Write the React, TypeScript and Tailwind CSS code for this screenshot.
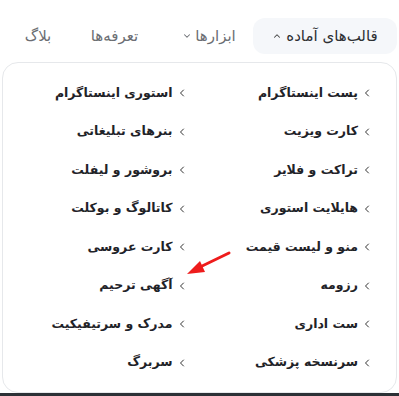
import { ChevronLeft, ChevronUp, ChevronDown } from "lucide-react";

const rightItems = [
  "پست اینستاگرام",
  "کارت ویزیت",
  "تراکت و فلایر",
  "هایلایت استوری",
  "منو و لیست قیمت",
  "رزومه",
  "ست اداری",
  "سرنسخه پزشکی",
];

const leftItems = [
  "استوری اینستاگرام",
  "بنرهای تبلیغاتی",
  "بروشور و لیفلت",
  "کاتالوگ و بوکلت",
  "کارت عروسی",
  "آگهی ترحیم",
  "مدرک و سرتیفیکیت",
  "سربرگ",
];

function Column({ items, className }: { items: string[]; className: string }) {
  return (
    <div className={`flex flex-col ${className}`}>
      {items.map((item) => (
        <a
          key={item}
          href="#"
          className="flex h-[38.5px] items-center gap-[3px] text-[12.5px] font-bold text-[#1f2328]"
        >
          <ChevronLeft className="h-3 w-3 text-[#333]" strokeWidth={2} />
          <span>{item}</span>
        </a>
      ))}
    </div>
  );
}

export default function App() {
  return (
    <div
      dir="rtl"
      className="relative h-[396px] w-[399px] overflow-hidden bg-white"
      style={{ fontFamily: '"DejaVu Sans", "Noto Sans", sans-serif' }}
    >
      {/* Top nav */}
      <nav className="flex items-center pt-[18px] pr-[2px]">
        <button className="flex h-[36px] w-[144px] items-center justify-center gap-[4px] rounded-xl bg-[#f5f7fa] text-[15px] text-[#2d2f33]">
          <span>قالب‌های آماده</span>
          <ChevronUp className="h-[10px] w-[10px] text-[#444]" strokeWidth={2.5} />
        </button>
        <button className="mr-[15px] flex w-[58px] items-center justify-center gap-[3px] text-[15px] text-[#6b6e73]">
          <span>ابزارها</span>
          <ChevronDown className="h-[10px] w-[10px]" strokeWidth={2.5} />
        </button>
        <a href="#" className="mr-[36px] w-[59px] text-center text-[15px] text-[#6b6e73]">
          تعرفه‌ها
        </a>
        <a href="#" className="mr-[27px] w-[40px] text-center text-[15px] text-[#6b6e73]">
          بلاگ
        </a>
      </nav>

      {/* Dropdown panel */}
      <div className="mx-[2px] mt-[8px] grid h-[331px] grid-cols-2 rounded-2xl border border-[#e6e8eb] bg-white py-[11px]">
        <Column items={rightItems} className="pr-[23px]" />
        <Column items={leftItems} className="pr-[12px]" />
      </div>

      {/* background peeking below */}
      <div className="absolute bottom-0 left-0 right-0 h-[3px] bg-[#2c3136]" />

      {/* red annotation arrow */}
      <svg
        className="pointer-events-none absolute left-0 top-0"
        width="399"
        height="396"
        viewBox="0 0 399 396"
      >
        <line x1="229" y1="253" x2="198" y2="268" stroke="#ee1c1c" strokeWidth="3" strokeLinecap="round" />
        <polygon points="187,274 200,261 205,272" fill="#ee1c1c" />
      </svg>
    </div>
  );
}
